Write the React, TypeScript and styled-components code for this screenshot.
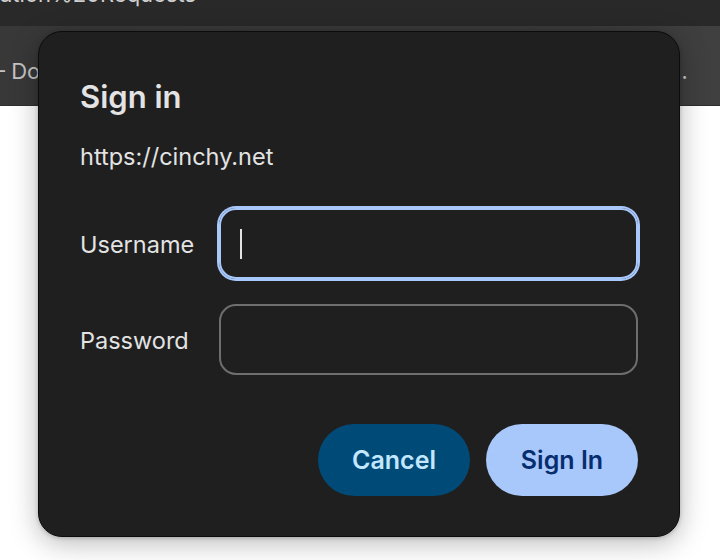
import React from "react";
import styled, { createGlobalStyle } from "styled-components";

const GlobalStyle = createGlobalStyle`
  * {
    box-sizing: border-box;
  }
  body {
    margin: 0;
    background-color: #ffffff;
    font-family: Inter, "Noto Sans", "Liberation Sans", sans-serif;
  }
`;

const App: React.FC = () => {
  return (
    <>
      <GlobalStyle />
      <Page>
        <TitleBar>
          <TitleText>ation%20Requests</TitleText>
        </TitleBar>
        <TabStrip>
          <TabText>
            – Documentation - Cinchy Platform Documentation and API Reference for Data Collaboration
          </TabText>
        </TabStrip>
        <Content />

        <Dialog>
          <Heading>Sign in</Heading>
          <Origin>https://cinchy.net</Origin>

          <Form>
            <Label>Username</Label>
            <Field focused>
              <Caret />
            </Field>

            <Label>Password</Label>
            <Field />
          </Form>

          <Actions>
            <Button variant="tonal">Cancel</Button>
            <Button variant="filled">Sign In</Button>
          </Actions>
        </Dialog>
      </Page>
    </>
  );
};

export default App;

const Page = styled.div`
  position: relative;
  width: 720px;
  height: 560px;
  overflow: hidden;
  display: flex;
  flex-direction: column;
`;

const TitleBar = styled.div`
  height: 26px;
  background-color: #292929;
  overflow: hidden;
  flex-shrink: 0;
`;

const TitleText = styled.div`
  margin-top: -19px;
  font-size: 22px;
  line-height: 27px;
  color: #cfcfcf;
  white-space: nowrap;
`;

const TabStrip = styled.div`
  height: 80px;
  background: linear-gradient(90deg, #383838 0%, #3a3a3a 80%, #404040 100%);
  display: flex;
  align-items: center;
  overflow: hidden;
  flex-shrink: 0;
  border-bottom: 1px solid #2e2e2e;
`;

const TabText = styled.div`
  width: 699px;
  flex-shrink: 0;
  padding-top: 10px;
  font-size: 22px;
  color: #c4c4c4;
  white-space: nowrap;
  overflow: hidden;
  text-overflow: ellipsis;
  margin-left: -6px;
`;

const Content = styled.div`
  flex: 1;
  background-color: #ffffff;
`;

const Dialog = styled.div`
  position: absolute;
  top: 31px;
  left: 38px;
  width: 642px;
  height: 506px;
  padding: 48px 41px 0 41px;
  background-color: #1f1f1f;
  border: 1px solid #0c0c0c;
  border-radius: 24px;
  box-shadow: 0 6px 28px rgba(0, 0, 0, 0.28), 0 1px 4px rgba(0, 0, 0, 0.2);
  display: flex;
  flex-direction: column;
  color: #e3e3e3;
`;

const Heading = styled.h1`
  margin: 0;
  font-size: 31px;
  line-height: 34px;
  font-weight: 600;
  color: #e3e3e3;
`;

const Origin = styled.div`
  margin-top: 29px;
  font-size: 23.5px;
  line-height: 27px;
  color: #e3e3e3;
`;

const Form = styled.div`
  margin-top: 38px;
  display: grid;
  grid-template-columns: 139px 1fr;
  row-gap: 25px;
  align-items: center;
`;

const Label = styled.div`
  font-size: 23.5px;
  line-height: 27px;
  color: #e3e3e3;
  padding-top: 2px;
`;

const Field = styled.div<{ focused?: boolean }>`
  height: 71px;
  border-radius: 17px;
  display: flex;
  align-items: center;
  padding-left: 19px;
  border: ${(p) => (p.focused ? "2px solid #a8c7fa" : "2px solid #6e6e6e")};
  box-shadow: ${(p) => (p.focused ? "0 0 0 2px #a8c7fa" : "none")};
`;

const Caret = styled.span`
  display: block;
  width: 2px;
  height: 30px;
  background-color: #e3e3e3;
`;

const Actions = styled.div`
  margin-top: 49px;
  display: flex;
  justify-content: flex-end;
  gap: 16px;
`;

const Button = styled.button<{ variant: "tonal" | "filled" }>`
  width: 152px;
  height: 72px;
  border: none;
  border-radius: 36px;
  font-family: inherit;
  font-size: 25px;
  font-weight: 600;
  cursor: pointer;
  background-color: ${(p) => (p.variant === "filled" ? "#a8c7fa" : "#004a77")};
  color: ${(p) => (p.variant === "filled" ? "#062e6f" : "#c2e7ff")};
`;
